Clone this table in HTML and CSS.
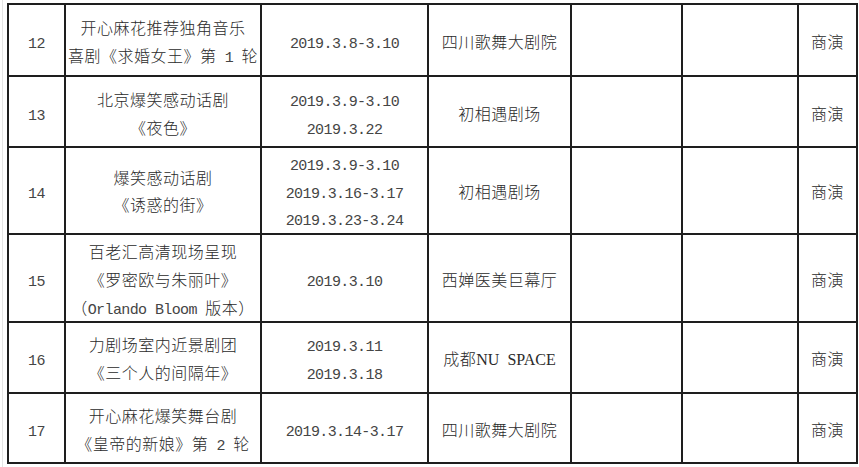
FILE: index.html
```html
<!DOCTYPE html>
<html lang="zh-CN">
<head>
<meta charset="utf-8">
<link rel="stylesheet" href="styles.css">
</head>
<body>
<div class="page">
<table class="sheet">
  <colgroup>
    <col class="c-no"><col class="c-title"><col class="c-date"><col class="c-venue"><col class="c-e1"><col class="c-e2"><col class="c-type">
  </colgroup>
  <tr class="r1">
    <td><span class="num">12</span></td>
    <td>开心麻花推荐独角音乐<br>喜剧《求婚女王》第<span class="num"> 1 </span>轮</td>
    <td><span class="num">2019.3.8-3.10</span></td>
    <td>四川歌舞大剧院</td>
    <td></td><td></td>
    <td>商演</td>
  </tr>
  <tr class="r2">
    <td><span class="num">13</span></td>
    <td>北京爆笑感动话剧<br>《夜色》</td>
    <td><span class="num">2019.3.9-3.10<br>2019.3.22</span></td>
    <td>初相遇剧场</td>
    <td></td><td></td>
    <td>商演</td>
  </tr>
  <tr class="r3">
    <td><span class="num">14</span></td>
    <td>爆笑感动话剧<br>《诱惑的街》</td>
    <td><span class="num">2019.3.9-3.10<br>2019.3.16-3.17<br>2019.3.23-3.24</span></td>
    <td>初相遇剧场</td>
    <td></td><td></td>
    <td>商演</td>
  </tr>
  <tr class="r4">
    <td><span class="num">15</span></td>
    <td>百老汇高清现场呈现<br>《罗密欧与朱丽叶》<br>（<span class="num">Orlando Bloom </span>版本）</td>
    <td><span class="num">2019.3.10</span></td>
    <td>西婵医美巨幕厅</td>
    <td></td><td></td>
    <td>商演</td>
  </tr>
  <tr class="r5">
    <td><span class="num">16</span></td>
    <td>力剧场室内近景剧团<br>《三个人的间隔年》</td>
    <td><span class="num">2019.3.11<br>2019.3.18</span></td>
    <td>成都<span class="latin">NU&nbsp;&nbsp;SPACE</span></td>
    <td></td><td></td>
    <td>商演</td>
  </tr>
  <tr class="r6">
    <td><span class="num">17</span></td>
    <td>开心麻花爆笑舞台剧<br>《皇帝的新娘》第<span class="num"> 2 </span>轮</td>
    <td><span class="num">2019.3.14-3.17</span></td>
    <td>四川歌舞大剧院</td>
    <td></td><td></td>
    <td>商演</td>
  </tr>
</table>
</div>
</body>
</html>
```
FILE: styles.css
```css
html, body {
  margin: 0;
  padding: 0;
  background: #fff;
}
.page {
  width: 857px;
  height: 467px;
  box-sizing: border-box;
  padding: 3px 0 0 4px;
  border-left: 1px solid #e4e4e4;
  margin-left: 2px;
  overflow: hidden;
}
.sheet {
  border-collapse: collapse;
  table-layout: fixed;
  width: 849px;
  font-family: "Noto Sans CJK SC", "Noto Sans", sans-serif;
  font-size: 16px;
  font-weight: 300;
  letter-spacing: 0.5px;
  color: #2a2a2a;
}
.sheet td {
  border: 2px solid #1e1e1e;
  text-align: center;
  vertical-align: middle;
  line-height: 28px;
  padding: 2px 0 0 0;
  white-space: nowrap;
  overflow: hidden;
}
.c-no { width: 57px; }
.c-title { width: 196px; }
.c-date { width: 167px; }
.c-venue { width: 143px; }
.c-e1 { width: 111px; }
.c-e2 { width: 116px; }
.c-type { width: 59px; }
.r1 { height: 72px; }
.r2 { height: 71px; }
.r3 { height: 86px; }
.r4 { height: 88px; }
.r5 { height: 71px; }
.r6 { height: 70px; }
.r3 td { line-height: 27.5px; }
.r4 td { line-height: 28px; }
.num {
  font-family: "Liberation Mono", "Noto Sans CJK SC", monospace;
  font-size: 15px;
  font-weight: 400;
  line-height: 16px;
  letter-spacing: -0.6px;
  color: #454545;
}
.latin {
  font-family: "Liberation Serif", serif;
  font-size: 16px;
  font-weight: 400;
  line-height: 16px;
  letter-spacing: 0;
}
```
